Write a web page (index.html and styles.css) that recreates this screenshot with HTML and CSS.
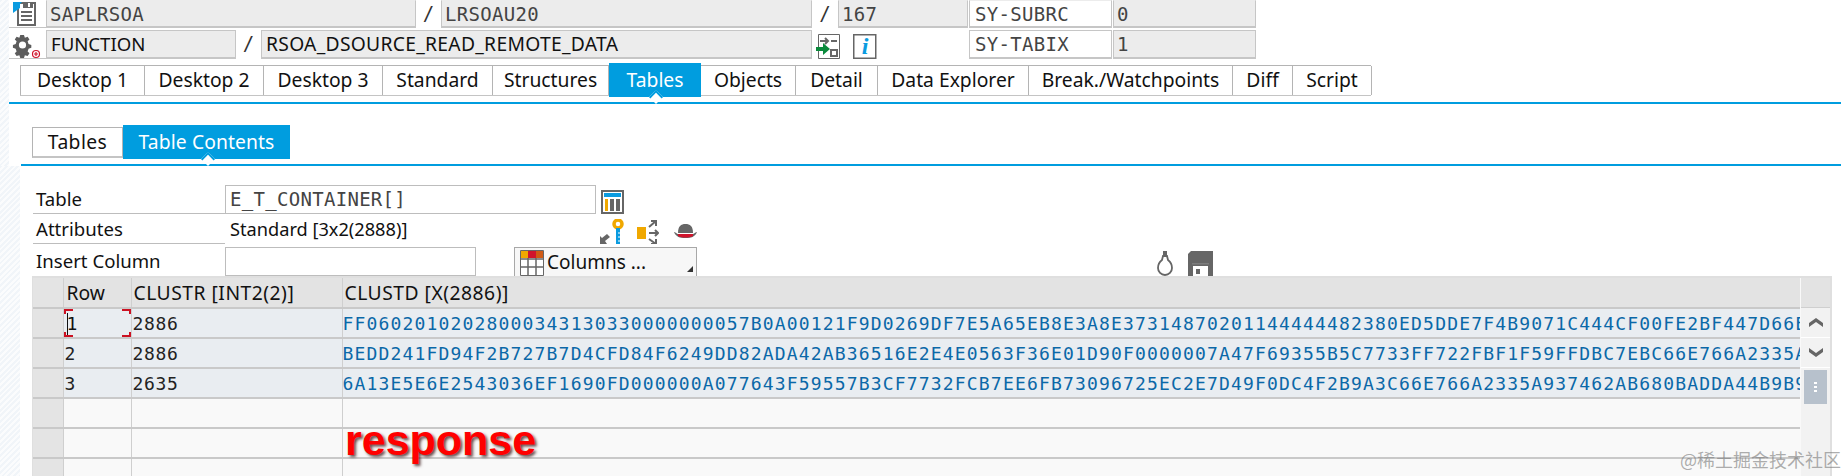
FILE: index.html
```html
<!DOCTYPE html>
<html lang="en">
<head>
<meta charset="utf-8">
<title>ABAP Debugger</title>
<link rel="stylesheet" href="styles.css">
</head>
<body>
<div class="page">
  <div class="toprow first">
    <div class="lead">
      <svg width="23" height="24" viewBox="0 0 23 24"><path d="M5 1h17v22H5z" fill="#fff" stroke="#666" stroke-width="2"/><path d="M10 0h10v6H10z" fill="#666"/><path d="M15 1h2v4h-2z" fill="#fff"/><path d="M8 9h11v2H8zM8 13h11v2H8zM8 17h11v2H8z" fill="#666"/><path d="M0 0h9L0 9z" fill="#0a9be0"/><path d="M0 0h7v6L0 11z" fill="#0a9be0"/></svg>
    </div>
    <div class="box mono w370">SAPLRSOA</div>
    <div class="slash w25">/</div>
    <div class="box mono w371">LRSOAU20</div>
    <div class="slash w26">/</div>
    <div class="box mono w130">167</div>
    <div class="box plain mono w143 ml1">SY-SUBRC</div>
    <div class="box mono w143 ml1">0</div>
  </div>
  <div class="toprow second">
    <div class="lead">
      <svg width="32" height="26" viewBox="0 0 32 26"><path d="M9 1h4l1 3 3-1 2 3-2 2 1 3 3 1v3l-3 1-1 3 2 2-2 3-3-1-1 3H9l-1-3-3 1-2-3 2-2-1-3-3-1v-3l3-1 1-3-2-2 2-3 3 1z" fill="#5c5c5c" transform="translate(0 1) scale(.92)"/><circle cx="10.500" cy="12" r="3.600" fill="#fff"/><circle cx="24" cy="21" r="3.500" fill="#fff" stroke="#d0142c" stroke-width="1.200"/><path d="M22 21h4M24 19v4" stroke="#d0142c" stroke-width="1.200"/></svg>
    </div>
    <div class="box sans fn w190">FUNCTION</div>
    <div class="slash w25">/</div>
    <div class="box sans wide w551">RSOA_DSOURCE_READ_REMOTE_DATA</div>
    <div class="tools">
      <svg class="tool" width="25" height="25" viewBox="0 0 25 25"><path d="M2.500.5h21v24h-21z" fill="#fff" stroke="#666"/><path d="M4 7h8m-3-3 3 3-3 3M15 7h6M15 16h6v6h-6z" stroke="#666" stroke-width="2" fill="none"/><path d="M0 13h7V9l7 6-7 6v-4H0z" fill="#0a8a3c"/></svg>
      <svg class="tool" width="24" height="25" viewBox="0 0 24 25"><path d="M.750.750h22v23.500h-22z" fill="#fff" stroke="#666" stroke-width="1.500"/><text class="info" x="12" y="20" text-anchor="middle">i</text></svg>
    </div>
    <div class="box plain mono w143">SY-TABIX</div>
    <div class="box mono w143 ml1">1</div>
  </div>

  <nav class="tabs">
    <div class="tab">Desktop 1</div>
    <div class="tab">Desktop 2</div>
    <div class="tab">Desktop 3</div>
    <div class="tab">Standard</div>
    <div class="tab">Structures</div>
    <div class="tab active">Tables</div>
    <div class="tab">Objects</div>
    <div class="tab">Detail</div>
    <div class="tab">Data Explorer</div>
    <div class="tab">Break./Watchpoints</div>
    <div class="tab">Diff</div>
    <div class="tab">Script</div>
  </nav>
  <div class="rule main"></div>

  <nav class="subtabs">
    <div class="tab">Tables</div>
    <div class="tab active">Table Contents</div>
  </nav>
  <div class="rule sub"></div>

  <div class="form">
    <div class="formrow r1">
      <div class="label">Table</div>
      <div class="field mono f371">E_T_CONTAINER[]</div>
      <svg class="tblicon" width="23" height="24" viewBox="0 0 23 24"><path d="M1 1h21v22H1z" fill="#fff" stroke="#666" stroke-width="2"/><path d="M3 3h17v4H3z" fill="#0a9be0"/><path d="M4 9h3v12H4z" fill="#f0a800"/><path d="M9 9h4v12H9zM15 9h4v12h-4z" fill="#666"/></svg>
    </div>
    <div class="formrow r2">
      <div class="label">Attributes</div>
      <div class="value">Standard [3x2(2888)]</div>
      <div class="attricons">
        <svg width="24" height="25" viewBox="0 0 24 25"><circle cx="18" cy="5" r="4" fill="none" stroke="#f0a800" stroke-width="3.500"/><path d="M16 9h4v16h-4z" fill="#0a9be0"/><path d="M18 14h2M18 18h2M18 22h2" stroke="#fff"/><path d="M0 25v-8l2 2 5-4 3 3-5 4 2 3z" fill="#666"/></svg>
        <svg width="22" height="25" viewBox="0 0 22 25"><path d="M0 8h9v12H0z" fill="#f0a800"/><path d="M12 8l7-6m-5 0h5v5M12 14h9m-3-3 3 3-3 3M12 20l7 5m-5 0h5v-5" stroke="#666" stroke-width="2" fill="none"/></svg>
        <svg width="25" height="17" viewBox="0 0 25 17"><path d="M5 10C5 3 8 1 12.500 1S20 3 20 10z" fill="#666"/><path d="M1 9c2 5 6 6 11.500 6S22 14 24 9c-3 1-3 2-4 2H5C4 11 4 10 1 9z" fill="#666"/><path d="M5 11h15v2c-4 2-11 2-15 0z" fill="#d0142c"/></svg>
      </div>
    </div>
    <div class="formrow r3">
      <div class="label">Insert Column</div>
      <div class="field f251"></div>
      <div class="colbtn">
        <svg width="25" height="27" viewBox="0 0 25 27"><path d="M.500.500h23v25H.500z" fill="#fff" stroke="#666"/><path d="M1 1h7v7H1z" fill="#f0a800"/><path d="M8 1h8v7H8z" fill="#d0142c"/><path d="M16 1h7v7h-7z" fill="#d05a14"/><path d="M1 9h22M1 17h22M8 8v17M16 8v17" stroke="#666" stroke-width="1.500"/></svg>
        <span>Columns ...</span>
        <i class="corner"></i>
      </div>
      <div class="sideicons">
        <svg width="16" height="25" viewBox="0 0 16 25"><path d="M6 0h4v5H6z" fill="#666"/><path d="M6 5 L5 9 C1 12 1 15 1 17 a7 7 0 0 0 14 0 C15 15 15 12 11 9 L10 5z" fill="#fff" stroke="#666" stroke-width="1.800"/></svg>
        <svg width="25" height="25" viewBox="0 0 25 25"><path d="M3 0h22v25H0V3z" fill="#666"/><path d="M4 12h17v1.500H4z" fill="#7c7c7c"/><path d="M5 15h15v10H5z" fill="#fff"/><path d="M8 18h4v5H8z" fill="#666"/></svg>
      </div>
    </div>
  </div>

  <div class="gridwrap">
    <table class="grid">
      <colgroup><col class="c0"><col class="c1"><col class="c2"><col class="c3"></colgroup>
      <thead>
        <tr><th class="rh"></th><th>Row</th><th class="caps">CLUSTR [INT2(2)]</th><th class="caps">CLUSTD [X(2886)]</th></tr>
      </thead>
      <tbody>
        <tr class="data"><td class="rh"></td><td class="mono focus">1</td><td class="mono">2886</td><td class="mono hex">FF06020102028000343130330000000057B0A00121F9D0269DF7E5A65EB8E3A8E37314870201144444482380ED5DDE7F4B9071C444CF00FE2BF447D66E</td></tr>
        <tr class="data"><td class="rh"></td><td class="mono">2</td><td class="mono">2886</td><td class="mono hex">BEDD241FD94F2B727B7D4CFD84F6249DD82ADA42AB36516E2E4E0563F36E01D90F0000007A47F69355B5C7733FF722FBF1F59FFDBC7EBC66E766A2335A93</td></tr>
        <tr class="data"><td class="rh"></td><td class="mono">3</td><td class="mono">2635</td><td class="mono hex">6A13E5E6E2543036EF1690FD000000A077643F59557B3CF7732FCB7EE6FB73096725EC2E7D49F0DC4F2B9A3C66E766A2335A937462AB680BADDA44B9B93</td></tr>
        <tr><td class="rh"></td><td></td><td></td><td></td></tr>
        <tr><td class="rh"></td><td></td><td></td><td></td></tr>
        <tr><td class="rh"></td><td></td><td></td><td></td></tr>
      </tbody>
    </table>
    <div class="scroll">
      <div class="scrollhead"></div>
      <div class="scrollbtn"><svg width="14" height="9" viewBox="0 0 14 9"><path d="M0 5l7-5 7 5v4L7 4 0 9z" fill="#666"/></svg></div>
      <div class="scrollbtn"><svg width="14" height="9" viewBox="0 0 14 9"><path d="M0 0l7 5 7-5v4L7 9 0 4z" fill="#666"/></svg></div>
      <div class="thumb"><i></i><i></i><i></i></div>
    </div>
    <div class="response">response</div>
  </div>
  <div class="watermark">@稀土掘金技术社区</div>
</div>
</body>
</html>
```
FILE: styles.css
```css
* { box-sizing: border-box; }
html, body { margin: 0; height: 476px; overflow: hidden; }
body {
  background: #fff;
  font-family: "Noto Sans", sans-serif;
  font-size: 19.3px;
  color: #111;
}
.page {
  position: relative;
  width: 1841px;
  height: 476px;
  overflow: hidden;
  background-image:
    repeating-linear-gradient(135deg, #f1f5f9 0 2px, #fbfcfd 2px 4px),
    repeating-linear-gradient(135deg, #f1f5f9 0 2px, #fbfcfd 2px 4px);
  background-size: 9px 166px, 20px 310px;
  background-position: 0 0, 0 166px;
  background-repeat: no-repeat;
}
.mono {
  font-family: "DejaVu Sans Mono", monospace;
  font-size: 19px;
  letter-spacing: 0.3px;
  color: #444;
}
.sans { font-family: "Noto Sans", sans-serif; font-size: 19.3px; color: #111; }
.sans.fn { font-size: 18.6px; }
.wide { letter-spacing: 0.28px; }

.toprow { display: flex; padding-left: 9px; }
.first { height: 28px; }
.second { height: 29px; margin-top: 2px; }
.lead {
  width: 37px;
  border-bottom: 1px solid #c4c4c4;
  padding-left: 3px;
  display: flex;
  align-items: flex-end;
}
.first .lead { padding: 0 0 1px 4px; }
.second .lead svg { margin-bottom: -1px; }
.box {
  background: #ececec;
  border: 1px solid #c6c6c6;
  border-top-color: #ececec;
  border-bottom-width: 2px;
  padding-left: 3px;
  line-height: 26px;
  white-space: nowrap;
  overflow: hidden;
}
.second .box { border-top-color: #c6c6c6; }
.box.plain { background: #fff; padding-left: 5px; }
.box.sans { padding-left: 4px; }
.slash { text-align: center; font-family: "DejaVu Sans Mono", monospace; font-size: 19px; line-height: 26px; color: #333; }
.w25 { width: 25px; }
.w26 { width: 26px; }
.w130 { width: 130px; }
.w143 { width: 143px; }
.w190 { width: 190px; }
.w370 { width: 370px; }
.w371 { width: 371px; }
.w551 { width: 551px; }
.ml1 { margin-left: 1px; }
.tools { width: 157px; display: flex; align-items: flex-end; padding-left: 4px; gap: 12px; }
.info { font: italic bold 24px "Liberation Serif", serif; fill: #0a9be0; }

.tabs {
  display: grid;
  grid-template-columns: 124px 119px 119px 110px 116px 92px 95px 82px 151px 204px 60px 79px;
  width: 1351px;
  height: 31px;
  margin: 6px 0 0 20px;
  border-top: 1px solid #b4b4b4;
  border-bottom: 2px solid #c4c4c4;
  border-left: 1px solid #b4b4b4;
}
.tab {
  position: relative;
  text-align: center;
  line-height: 28px;
  border-right: 1px solid #b4b4b4;
  background: #fff;
  color: #111;
}
.tab.active {
  margin: -3px 0 -2px;
  line-height: 34px;
  background: #009ddf;
  color: #fff;
  border-right: 0;
}
.tab.active::after {
  content: "";
  position: absolute;
  left: 50%;
  bottom: -5px;
  width: 8px;
  height: 8px;
  margin-left: -4px;
  background: #fff;
  border-left: 2px solid #009ddf;
  border-top: 2px solid #009ddf;
  transform: rotate(45deg);
  z-index: 2;
}
.rule { height: 2px; background: #009ddf; }
.rule.main { margin: 6px 0 0 9px; }
.rule.sub { margin: 5px 0 0 21px; }

.subtabs { display: flex; margin: 21px 0 0 32px; height: 34px; }
.subtabs .tab {
  width: 91px;
  margin-top: 2px;
  height: 31px;
  border: 1px solid #b4b4b4;
  border-bottom: 2px solid #c4c4c4;
  line-height: 27px;
  letter-spacing: 0.4px;
}
.subtabs .tab.active {
  width: 167px;
  margin: 0;
  height: 34px;
  border: 0;
  line-height: 34px;
  letter-spacing: 0.1px;
}

.form { margin: 19px 0 0 33px; font-size: 18.6px; }
.formrow { display: flex; }
.r1 { height: 29px; }
.r2 { height: 29px; margin-top: 1px; }
.r3 { height: 29px; margin-top: 3px; }
.label {
  width: 192px;
  border-bottom: 1px solid #bdbdbd;
  padding-left: 3px;
  line-height: 28px;
}
.r3 .label { border-bottom: 0; }
.field {
  border: 1px solid #bdbdbd;
  background: #fff;
  padding-left: 4px;
  line-height: 27px;
  overflow: hidden;
  white-space: nowrap;
}
.f371 { width: 371px; }
.f251 { width: 251px; }
.tblicon { margin: 5px 0 0 5px; }
.value { width: 375px; padding-left: 5px; line-height: 28px; font-size: 18.2px; }
.attricons { display: flex; align-items: flex-start; margin-top: 4px; }
.attricons svg:nth-child(2) { margin-left: 13px; }
.attricons svg:nth-child(3) { margin: 4px 0 0 14px; }
.colbtn {
  width: 183px;
  margin-left: 38px;
  position: relative;
  display: flex;
  align-items: flex-start;
  gap: 2px;
  padding: 2px 0 0 5px;
  background: #f7f7f7;
  border: 1px solid #a8a8a8;
  border-bottom: 0;
}
.colbtn span { line-height: 24px; color: #111; font-size: 19px; }
.corner {
  position: absolute;
  right: 3px;
  bottom: 4px;
  border-style: solid;
  border-width: 0 0 6px 6px;
  border-color: transparent transparent #333 transparent;
}
.sideicons { display: flex; align-items: flex-end; gap: 15px; margin-left: 460px; }

.gridwrap {
  position: relative;
  display: flex;
  margin-left: 32px;
  width: 1800px;
  height: 200px;
  border-top: 2px solid #dfdfdf;
  border-right: 2px solid #dfdfdf;
  border-left: 1px solid #dfdfdf;
  background: #f9f9f9;
}
.grid {
  table-layout: fixed;
  width: 1767px;
  border-collapse: collapse;
  align-self: flex-start;
}
.c0 { width: 30px; }
.c1 { width: 68px; }
.c2 { width: 211px; }
.c3 { width: 1458px; }
.grid th, .grid td {
  height: 30px;
  padding: 0 0 0 3px;
  text-align: left;
  white-space: nowrap;
  overflow: hidden;
  border-bottom: 2px solid #c9c9c9;
  border-left: 1px solid #cfcfcf;
}
.grid th {
  background: #e3e3e3;
  font-weight: 400;
  color: #111;
  padding-left: 3px;
}
.grid th.caps { letter-spacing: 0.5px; padding-left: 2px; }
.grid td.rh, .grid th.rh { background: #e4e4e4; border-left: 0; }
.data td { background: #e9edf1; }
.grid td.mono { padding-left: 1px; font-size: 18px; letter-spacing: 0.7px; color: #222; }
.grid td.mono.hex { padding-left: 0; letter-spacing: 1.17px; color: #0b68a8; }
.grid td.mono.focus {
  position: relative;
  color: #111;
  padding-left: 3px;
  overflow: visible;
  background-image:
    linear-gradient(#cc1122, #cc1122), linear-gradient(#cc1122, #cc1122),
    linear-gradient(#cc1122, #cc1122), linear-gradient(#cc1122, #cc1122),
    linear-gradient(#cc1122, #cc1122), linear-gradient(#cc1122, #cc1122),
    linear-gradient(#cc1122, #cc1122), linear-gradient(#cc1122, #cc1122),
    linear-gradient(#111, #111);
  background-size: 9px 2px, 2px 5px, 9px 2px, 2px 5px, 9px 2px, 2px 5px, 9px 2px, 2px 5px, 1px 22px;
  background-position: 0 0, 0 0, 100% 0, 100% 0, 0 100%, 0 100%, 100% 100%, 100% 100%, 3px 4px;
  background-repeat: no-repeat;
}
.scroll { width: 30px; margin-left: 1px; background: #f2f2f2; }
.scrollhead { height: 30px; background: #e3e3e3; border-bottom: 1px solid #cfcfcf; }
.scrollbtn {
  height: 30px;
  display: flex;
  align-items: center;
  justify-content: center;
  border-bottom: 1px solid #fff;
}
.thumb {
  width: 23px;
  height: 34px;
  margin: 2px 0 0 3px;
  background: #b7c1cc;
  display: flex;
  flex-direction: column;
  align-items: center;
  justify-content: center;
  gap: 2px;
}
.thumb i { width: 3px; height: 2px; background: #fff; }
.response {
  position: absolute;
  left: 312px;
  top: 137px;
  font: 700 43px/50px "Liberation Sans", Arial, sans-serif;
  color: #f00;
  text-shadow: 2px 2px 3px rgba(40, 0, 0, 0.7);
}
.watermark {
  position: absolute;
  right: 0;
  bottom: 6px;
  font-family: "Noto Sans CJK SC", sans-serif;
  font-size: 18px;
  line-height: 22px;
  color: rgba(120, 120, 120, 0.6);
}
```
